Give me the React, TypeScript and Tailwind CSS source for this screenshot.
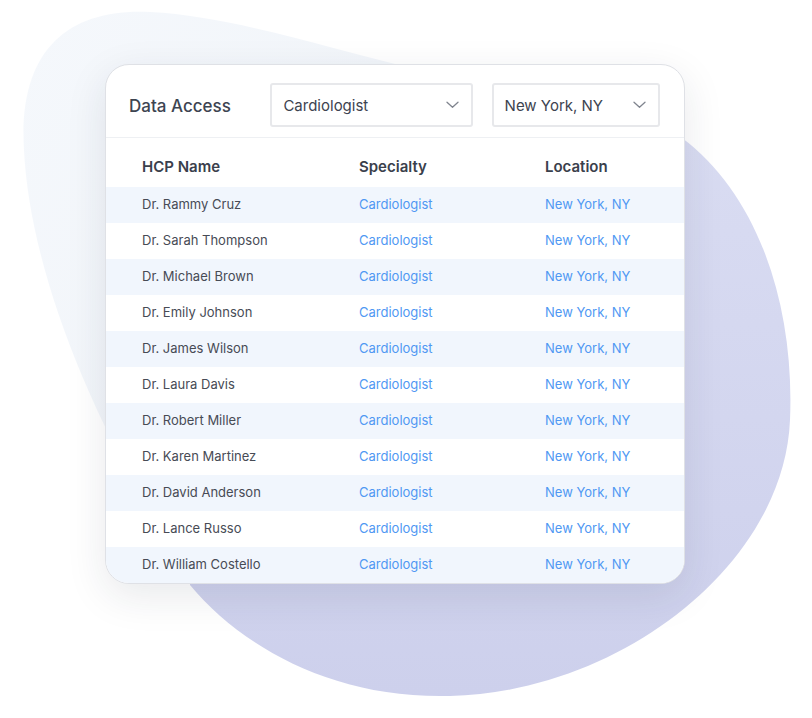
import React from 'react';

const doctors = [
  'Dr. Rammy Cruz',
  'Dr. Sarah Thompson',
  'Dr. Michael Brown',
  'Dr. Emily Johnson',
  'Dr. James Wilson',
  'Dr. Laura Davis',
  'Dr. Robert Miller',
  'Dr. Karen Martinez',
  'Dr. David Anderson',
  'Dr. Lance Russo',
  'Dr. William Costello',
];

const Chevron = () => (
  <svg width="13" height="8" viewBox="0 0 13 8" fill="none">
    <path d="M1 1.2l5.5 5L12 1.2" stroke="#80858f" strokeWidth="1.3" strokeLinecap="round" strokeLinejoin="round" />
  </svg>
);

const Select = ({ value, width }: { value: string; width: string }) => (
  <div className={`${width} h-[44px] flex items-center justify-between pl-[11px] pr-[12px] border-2 border-[#e7e8eb] rounded-[3px] bg-white`}>
    <span className="pt-[3px] text-[15px] text-[#3d4350]">{value}</span>
    <Chevron />
  </div>
);

export default function App() {
  return (
    <div className="relative w-[812px] h-[718px] bg-white overflow-hidden" style={{ fontFamily: 'Inter, "Open Sans", sans-serif' }}>
      {/* background blobs */}
      <svg className="absolute inset-0" width="812" height="718" viewBox="0 0 812 718">
        <defs>
          <linearGradient id="lav" x1="0" y1="0" x2="0" y2="1">
            <stop offset="0" stopColor="#d9dcf2" />
            <stop offset="1" stopColor="#cdd0ec" />
          </linearGradient>
          <linearGradient id="faint" x1="0" y1="0" x2="1" y2="1">
            <stop offset="0" stopColor="#f5f8fc" />
            <stop offset="1" stopColor="#eff3f8" />
          </linearGradient>
        </defs>
        <path d="M150 12 C70 8 18 48 24 150 C30 270 92 430 200 592 L420 592 L420 70 C320 46 230 16 150 12 Z" fill="url(#faint)" />
        <path d="M682 138 C755 192 795 300 790 420 C784 565 620 692 450 696 C330 699 240 645 190 585 L190 138 Z" fill="url(#lav)" />
      </svg>

      <div className="relative pt-[64px] pl-[105px]">
        <div className="w-[580px] bg-white rounded-[24px] border border-[#dfe1e6] shadow-[0_12px_40px_rgba(30,40,60,0.10)] overflow-hidden">
          <div className="flex items-center pt-[18px] pb-[10px] pl-[23px] pr-[24px] border-b border-[#eef0f3]">
            <span className="w-[142px] pt-[3px] text-[17px] font-medium text-[#3d4451]">Data Access</span>
            <Select value="Cardiologist" width="w-[203px]" />
            <div className="w-[19px]" />
            <Select value="New York, NY" width="w-[169px]" />
          </div>

          <div className="grid grid-cols-[217px_186px_1fr] pl-[36px] h-[49px] items-center pt-[9px]">
            <span className="text-[15px] font-semibold text-[#3a404c]">HCP Name</span>
            <span className="text-[15px] font-semibold text-[#3a404c]">Specialty</span>
            <span className="text-[15px] font-semibold text-[#3a404c]">Location</span>
          </div>

          <div className="flex flex-col">
            {doctors.map((name, i) => (
              <div
                key={name}
                className={`grid grid-cols-[217px_186px_1fr] pl-[36px] h-[36px] items-center ${i % 2 === 0 ? 'bg-[#f1f6fd]' : 'bg-white'}`}
              >
                <span className="text-[13px] text-[#474b55]">{name}</span>
                <span className="text-[13px] text-[#4f98f3]">Cardiologist</span>
                <span className="text-[13px] text-[#4f98f3]">New York, NY</span>
              </div>
            ))}
          </div>
        </div>
      </div>
    </div>
  );
}
